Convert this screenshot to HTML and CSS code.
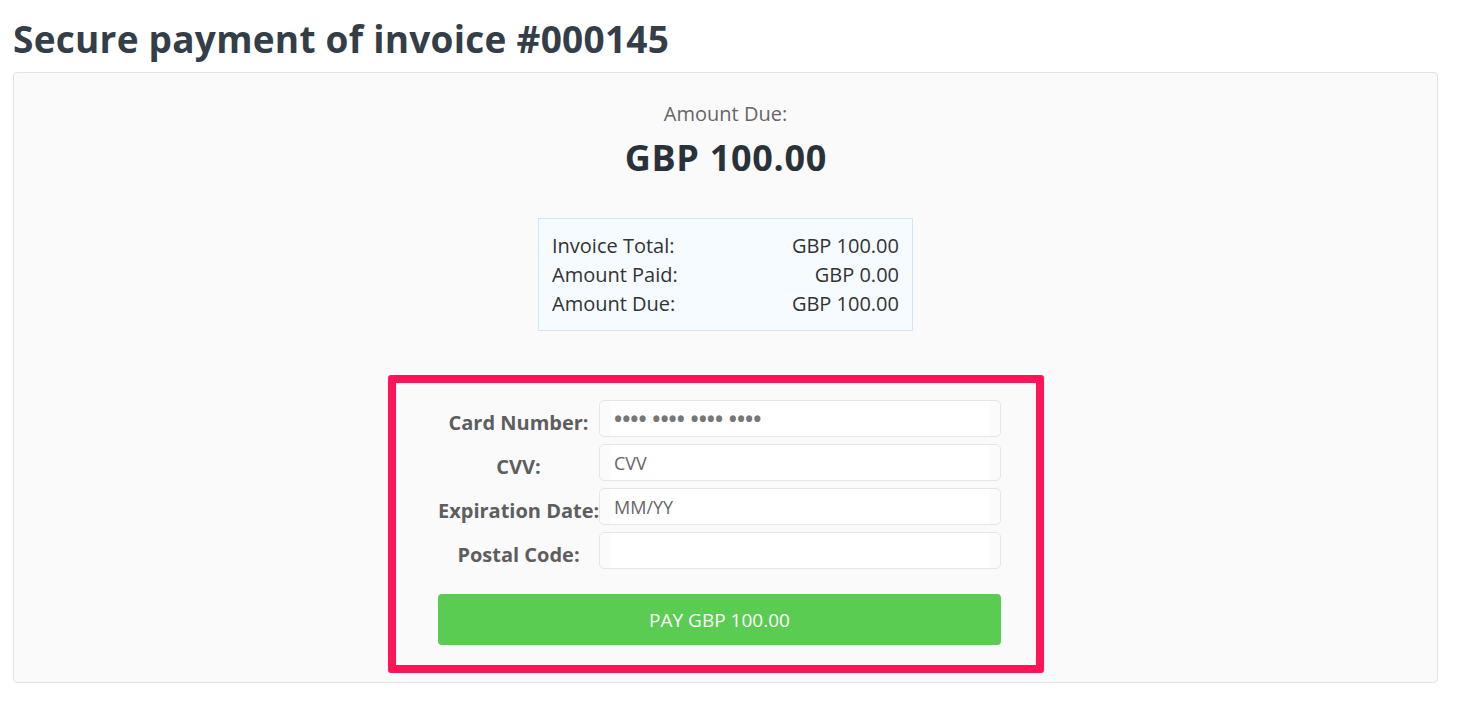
FILE: index.html
```html
<!DOCTYPE html>
<html lang="en">
<head>
<meta charset="utf-8">
<title>Secure payment of invoice #000145</title>
<link rel="stylesheet" href="styles.css">
</head>
<body>
<div class="page">
  <h1 class="title">Secure payment of invoice #000145</h1>
  <div class="panel">
    <div class="due-label">Amount Due:</div>
    <div class="due-amount">GBP 100.00</div>
    <div class="summary">
      <div class="summary-row"><span>Invoice Total:</span><span>GBP 100.00</span></div>
      <div class="summary-row"><span>Amount Paid:</span><span>GBP 0.00</span></div>
      <div class="summary-row"><span>Amount Due:</span><span>GBP 100.00</span></div>
    </div>
    <form class="pay-box">
      <div class="fields">
        <label class="field-label">Card Number:</label>
        <div class="field"><span class="dots">•••• •••• •••• ••••</span></div>
        <label class="field-label">CVV:</label>
        <div class="field"><span class="ph">CVV</span></div>
        <label class="field-label">Expiration Date:</label>
        <div class="field"><span class="ph">MM/YY</span></div>
        <label class="field-label">Postal Code:</label>
        <div class="field"><span class="ph"></span></div>
      </div>
      <button type="button" class="pay-btn">PAY GBP 100.00</button>
    </form>
  </div>
</div>
</body>
</html>
```
FILE: styles.css
```css
* { box-sizing: border-box; }
html, body { margin: 0; padding: 0; background: #ffffff; }
body {
  font-family: "Open Sans", "Noto Sans", "Liberation Sans", sans-serif;
  color: #333;
}
.page {
  padding: 0 29px 0 13px;
}
.title {
  margin: 0;
  padding-top: 17px;
  font-size: 37px;
  letter-spacing: 0.25px;
  line-height: 44px;
  font-weight: 700;
  color: #333e48;
  height: 72px;
  white-space: nowrap;
}
.panel {
  background: #fafafa;
  border: 1px solid #e3e3e3;
  border-radius: 4px;
  height: 611px;
  display: flex;
  flex-direction: column;
  align-items: center;
  padding-top: 29px;
}
.due-label {
  font-size: 20px;
  line-height: 24px;
  color: #666;
}
.due-amount {
  font-size: 36px;
  letter-spacing: 0.7px;
  margin-right: -0.7px;
  font-weight: 700;
  line-height: 44px;
  color: #29323b;
  margin-top: 10px;
}
.summary {
  margin-top: 38px;
  width: 375px;
  height: 113px;
  border: 1px solid #cfe7f7;
  background: #f6fbff;
  padding: 12px 13px 0 13px;
  font-size: 20px;
  line-height: 29px;
  color: #333;
}
.summary-row {
  display: flex;
  justify-content: space-between;
}
.pay-box {
  margin-top: 44px;
  margin-left: -19px;
  width: 656px;
  height: 298px;
  border: 8px solid #ff1457;
  border-radius: 3px;
  padding: 17px 35px 0 42px;
}
.fields {
  display: grid;
  grid-template-columns: 161px 402px;
  grid-auto-rows: 37px;
  row-gap: 7px;
}
.field-label {
  font-size: 20px;
  font-weight: 700;
  color: #5e5e5e;
  text-align: center;
  white-space: nowrap;
  padding-top: 9px;
  line-height: 28px;
}
.field {
  border: 1px solid #e6e6e6;
  border-radius: 5px;
  background: linear-gradient(to right, #fbfbfb 0, #fbfbfb 11px, #ffffff 11px, #ffffff calc(100% - 11px), #fbfbfb calc(100% - 11px));
  display: flex;
  align-items: center;
  padding-left: 14px;
  font-size: 18px;
  color: #666;
}
.dots {
  color: #777;
  font-size: 21.7px;
  font-weight: 700;
  line-height: 1;
}
.pay-btn {
  display: block;
  margin-top: 25px;
  width: 563px;
  height: 51px;
  border: 0;
  border-radius: 4px;
  background: #5acc52;
  color: #ffffff;
  font-family: "Open Sans", "Noto Sans", "Liberation Sans", sans-serif;
  font-size: 19px;
  padding: 0;
}
```
